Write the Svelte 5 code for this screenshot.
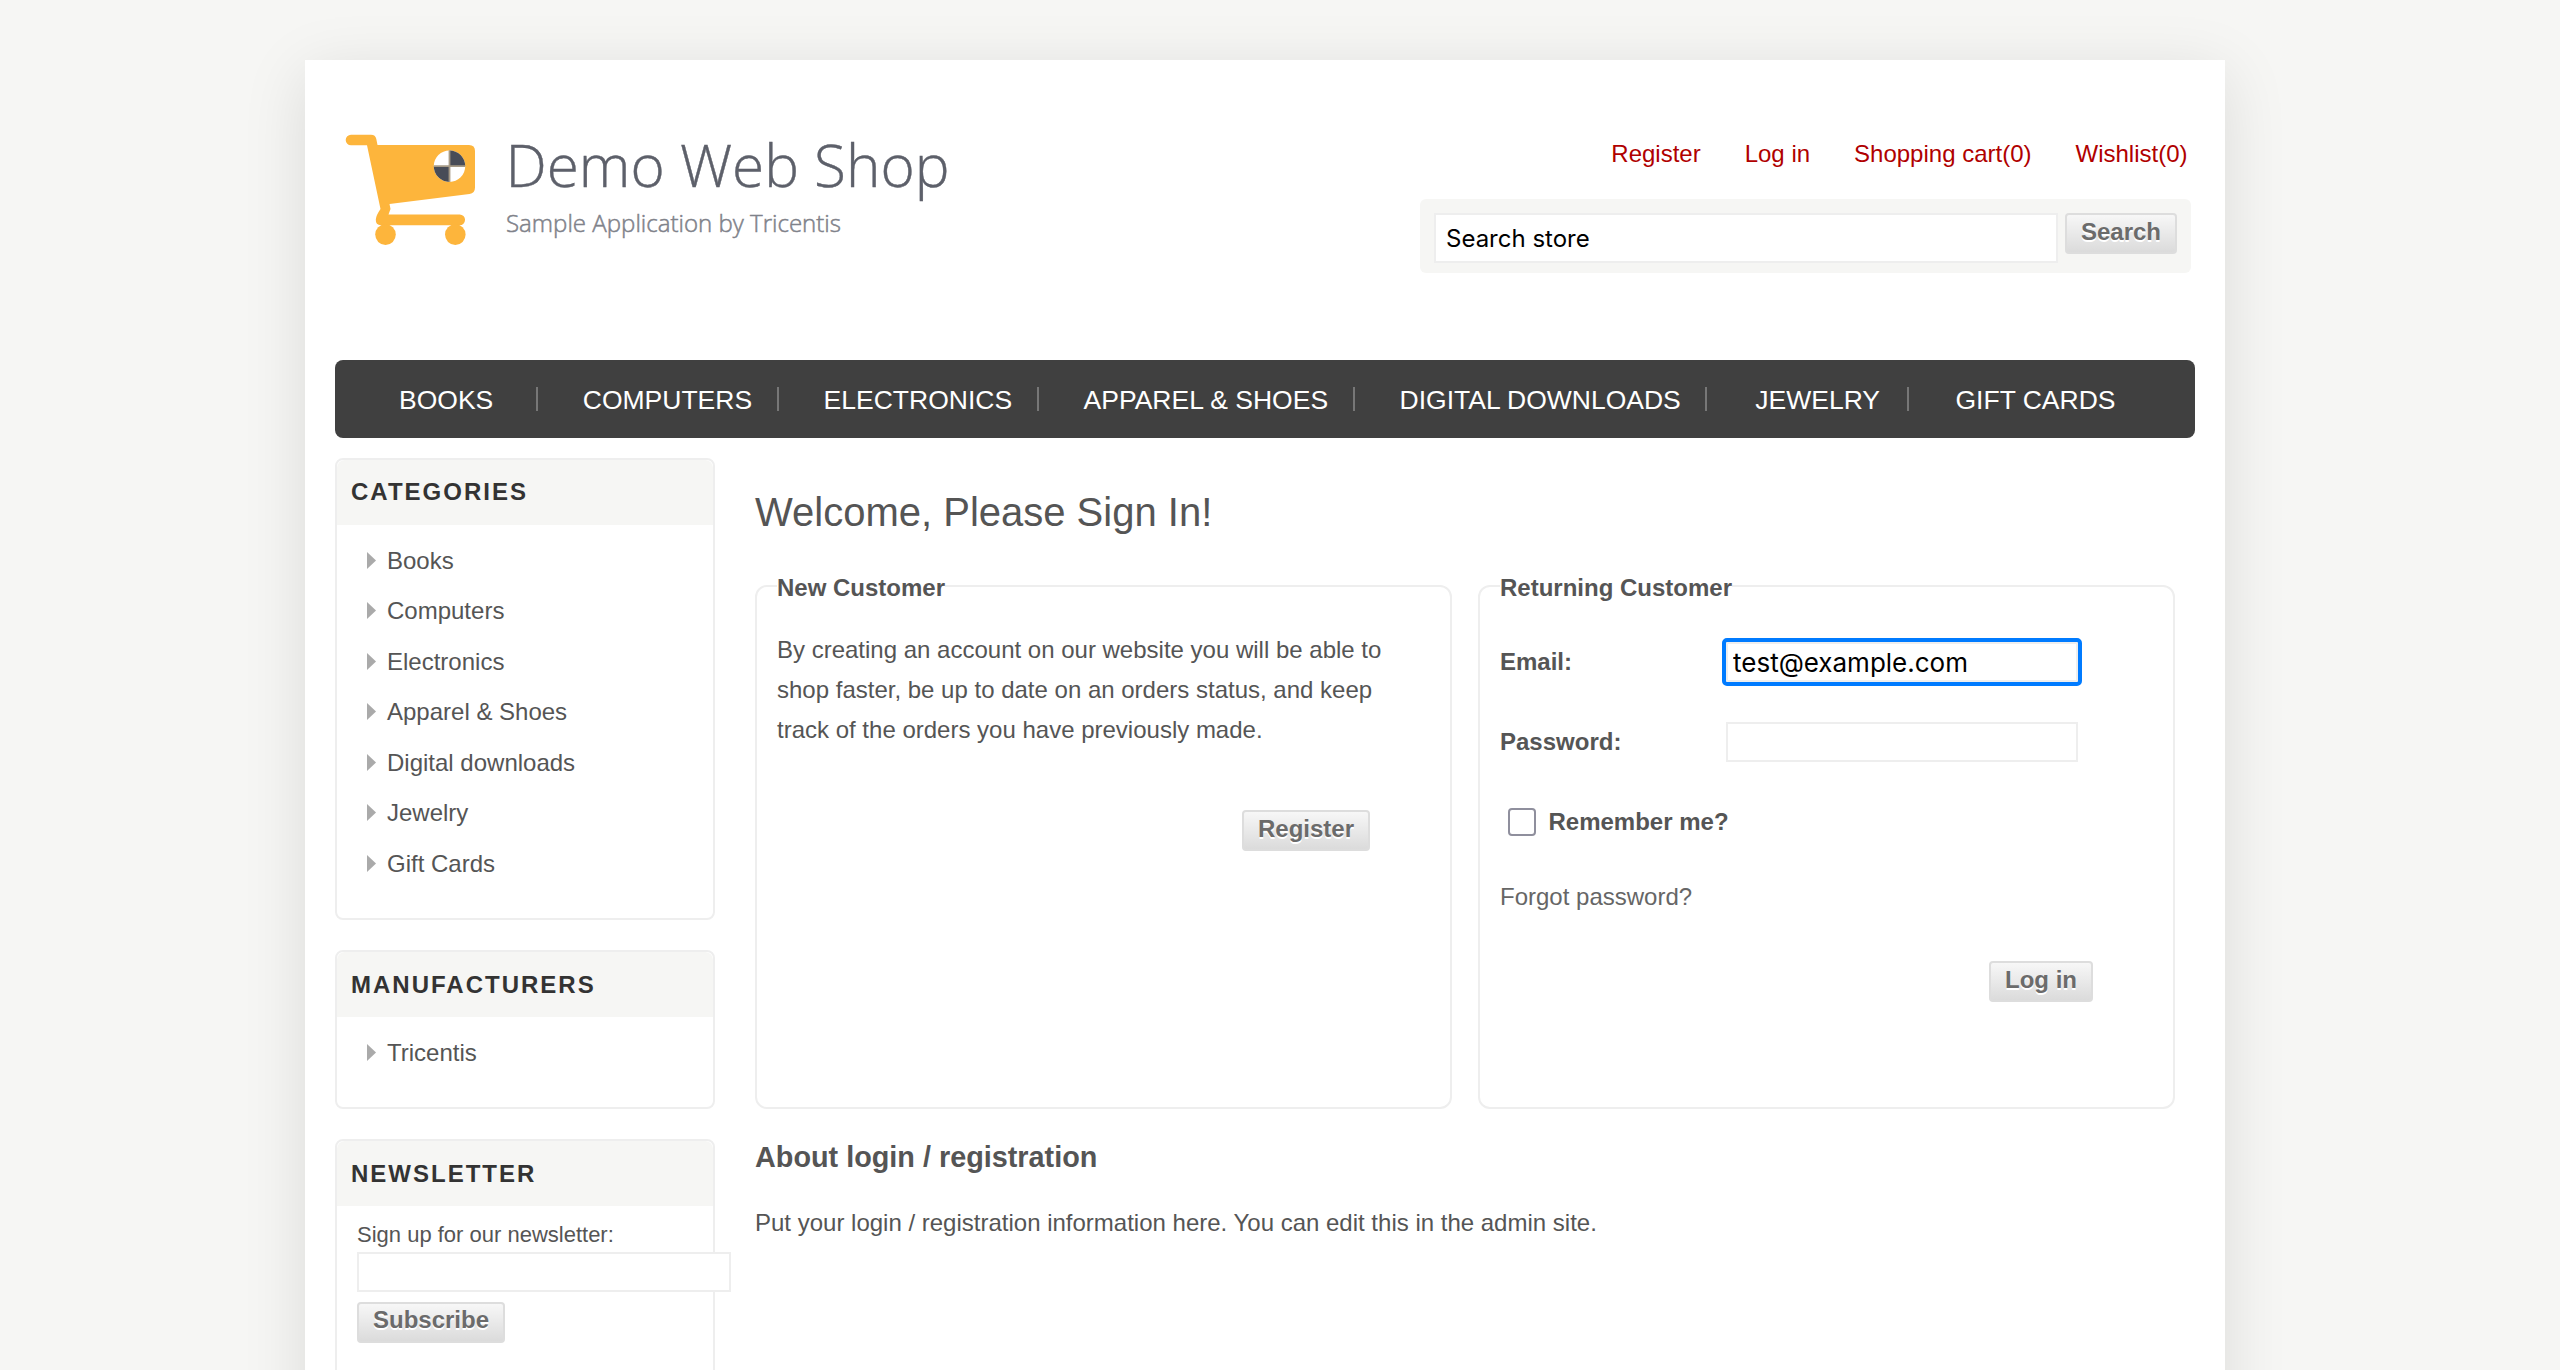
<script>
  const account = ['Register', 'Log in', 'Shopping cart(0)', 'Wishlist(0)'];
  const menu = ['Books', 'Computers', 'Electronics', 'Apparel & Shoes', 'Digital downloads', 'Jewelry', 'Gift Cards'];
  const blocks = [
    { title: 'Categories', items: menu },
    { title: 'Manufacturers', items: ['Tricentis'] }
  ];
  let search = $state('Search store');
  let email = $state('test@example.com');
  let password = $state('');
  let newsletter = $state('');
  let remember = $state(false);
</script>

<div class="page">
  <header>
    <svg class="logo" width="620" height="130" viewBox="335 120 620 130">
      <g fill="#fdb53c">
        <path d="M351 134.7H371Q375.500 134.700 376.300 139L377.500 145H469Q475 145 475 151V187.500Q475 193 469.500 194L389.500 204L390.500 209L388.500 214.500H459.700A5.300 5.300 0 0 1 459.700 225.200H381Q375.500 225.200 375.800 219.500Q376 215.500 380.500 209L367 145.300H351A5.300 5.300 0 0 1 351 134.700Z" />
        <circle cx="385.500" cy="234.600" r="10.300" />
        <circle cx="455.300" cy="234.600" r="10.300" />
      </g>
      <circle cx="449.500" cy="166.200" r="15.700" fill="#fff" />
      <path d="M449.500 166.200V150.500A15.700 15.700 0 0 1 465.200 166.200ZM449.500 166.200V181.900A15.700 15.700 0 0 1 433.800 166.200Z" fill="#484c57" />
      <path d="M449.500 150.500V181.900M433.800 166.200H465.200" stroke="#a69a86" stroke-width="1.800" />
      <text class="brand" x="505.500" y="187" textLength="444" lengthAdjust="spacingAndGlyphs">Demo Web Shop</text>
      <text class="tagline" x="506" y="232" textLength="335" lengthAdjust="spacingAndGlyphs">Sample Application by Tricentis</text>
    </svg>
    <div class="tools">
      <nav class="account">
        {#each account as item}<a href="#top">{item}</a>{/each}
      </nav>
      <form class="search">
        <input class="field" bind:value={search} />
        <button type="button">Search</button>
      </form>
    </div>
  </header>

  <nav class="menu">
    {#each menu as item}<a href="#top">{item}</a>{/each}
  </nav>

  <div class="columns">
    <aside>
      {#each blocks as block}
        <section class="block">
          <h3>{block.title}</h3>
          <ul>
            {#each block.items as item}
              <li>
                <svg width="9" height="17" viewBox="0 0 9 17"><path d="M0 0L9 8.500L0 17Z" fill="#aaa" /></svg>
                <span>{item}</span>
              </li>
            {/each}
          </ul>
        </section>
      {/each}
      <section class="block">
        <h3>Newsletter</h3>
        <div class="signup">
          <label for="newsletter">Sign up for our newsletter:</label>
          <input id="newsletter" class="field" bind:value={newsletter} />
          <button type="button">Subscribe</button>
        </div>
      </section>
    </aside>

    <main>
      <h1>Welcome, Please Sign In!</h1>
      <div class="panels">
        <section class="panel">
          <strong class="legend">New Customer</strong>
          <p class="intro">By creating an account on our website you will be able to shop faster, be up to date on an orders status, and keep track of the orders you have previously made.</p>
          <div class="action register"><button type="button">Register</button></div>
        </section>
        <section class="panel">
          <strong class="legend">Returning Customer</strong>
          <div class="row email">
            <label for="email">Email:</label>
            <input id="email" class="field focused" bind:value={email} />
          </div>
          <div class="row">
            <label for="password">Password:</label>
            <input id="password" class="field" type="password" bind:value={password} />
          </div>
          <div class="remember">
            <input id="remember" type="checkbox" bind:checked={remember} />
            <label for="remember">Remember me?</label>
          </div>
          <a class="forgot" href="#top">Forgot password?</a>
          <div class="action login"><button type="button">Log in</button></div>
        </section>
      </div>
      <h2>About login / registration</h2>
      <p class="about">Put your login / registration information here. You can edit this in the admin site.</p>
    </main>
  </div>
</div>

<style>
  :global(body) {
    background: #f6f6f4;
    overflow: hidden;
  }
  .page, .page * { box-sizing: border-box; }
  .page {
    width: 1920px;
    height: 1500px;
    margin: 60px 0 0 305px;
    padding: 0 30px;
    background: #fff;
    box-shadow: 0 13px 60px rgba(0, 0, 0, 0.115);
    color: #555;
    font: 24px/28px "Liberation Sans", Arial, sans-serif;
  }
  a { color: inherit; text-decoration: none; }
  h1, h2, h3, p, ul { margin: 0; padding: 0; }
  header {
    display: flex;
    justify-content: space-between;
    height: 300px;
  }
  .logo { display: block; margin-top: 60px; }
  .brand, .tagline { font-family: "Open Sans", sans-serif; font-weight: 300; }
  .brand { font-size: 58px; fill: #5d606a; stroke: #5d606a; stroke-width: 0.4px; }
  .tagline { font-size: 24px; fill: #7f828a; stroke: #7f828a; stroke-width: 0.5px; }
  .tools { width: 771px; margin-right: 4px; padding-top: 80px; }
  .account {
    display: flex;
    justify-content: flex-end;
    gap: 44px;
    height: 59px;
    padding-right: 3.500px;
    color: #b00000;
  }
  .search {
    display: flex;
    align-items: flex-start;
    gap: 7px;
    height: 74px;
    padding: 14px;
    border-radius: 6px;
    background: #f6f6f4;
  }
  .field {
    display: block;
    height: 40px;
    padding: 2px 5px;
    border: 2px solid #eee;
    border-radius: 0;
    outline: none;
    background: #fff;
    color: #000;
    font: 26px Inter, sans-serif;
  }
  .search .field { width: 624px; height: 50px; padding: 2px 10px; font-size: 24px; }
  button {
    display: block;
    height: 41px;
    padding: 0 14px 4px;
    border: 2px solid #ddd;
    border-radius: 4px;
    background: linear-gradient(#f7f7f7, #dbdbdb);
    color: #6b6b6b;
    font: bold 24px/32px "Liberation Sans", Arial, sans-serif;
    text-shadow: 0 2px 0 #fff;
  }
  .menu {
    display: flex;
    align-items: center;
    height: 78px;
    padding-left: 18px;
    border-radius: 8px;
    background: #404040;
    color: #fff;
    font-size: 26.500px;
    text-transform: uppercase;
  }
  .menu a {
    height: 24px;
    padding: 0 24.500px 0 45px;
    border-right: 2px solid #777;
    line-height: 26px;
    white-space: nowrap;
  }
  .menu a:first-child { padding-left: 46px; padding-right: 42.500px; }
  .menu a:nth-child(6) { padding-left: 48px; padding-right: 27px; }
  .menu a:last-child { padding-left: 46.500px; border: 0; }
  .columns { display: flex; gap: 40px; padding-top: 20px; }
  aside { width: 380px; }
  .block {
    margin-bottom: 30px;
    border: 2px solid #eee;
    border-radius: 8px;
  }
  h3 {
    height: 65px;
    padding-left: 14px;
    border-radius: 8px 8px 0 0;
    background: #f6f6f4;
    color: #333;
    font-size: 24px;
    line-height: 65px;
    letter-spacing: 2px;
    text-transform: uppercase;
  }
  .block:first-child h3 { line-height: 64px; }
  ul { padding: 10px 0 29px 30px; list-style: none; }
  .block:first-child ul { padding-bottom: 29.500px; }
  li {
    display: flex;
    align-items: center;
    gap: 11px;
    height: 50.500px;
  }
  li span { padding-top: 1px; }
  .signup {
    display: flex;
    flex-direction: column;
    align-items: flex-start;
    height: 190px;
    padding: 14px 0 0 20px;
    font-size: 22px;
  }
  .signup label { height: 32px; line-height: 30px; }
  .signup .field { width: 374px; flex: none; margin-bottom: 10px; }
  main { width: 1420px; }
  h1 { padding-top: 31px; font-size: 40px; font-weight: normal; line-height: 46px; }
  .panels { display: flex; gap: 26px; padding-top: 50px; }
  .panel {
    width: 697px;
    height: 524px;
    padding: 0 20px;
    border: 2px solid #eee;
    border-radius: 12px;
  }
  .legend {
    display: block;
    width: fit-content;
    height: 28px;
    margin-top: -14px;
    background: #fff;
    line-height: 30px;
  }
  .intro { width: 640px; padding-top: 29px; line-height: 40px; }
  .action { display: flex; justify-content: flex-end; }
  .register { padding: 60px 60px 0 0; }
  .row { display: flex; align-items: center; height: 80px; font-weight: bold; }
  .row label { width: 226px; }
  .row .field { width: 352px; }
  .email { margin-top: 21px; }
  .focused { outline: 4px solid #007bff; border-radius: 1px; }
  .remember { display: flex; align-items: center; gap: 12.500px; height: 80px; padding-left: 8px; font-weight: bold; }
  .remember input {
    appearance: none;
    width: 28px;
    height: 28px;
    margin: 0;
    border: 2px solid #8f8f9d;
    border-radius: 4px;
    background: #fff;
  }
  .forgot { display: block; padding-top: 21px; color: #666; }
  .login { padding: 50px 60px 0 0; }
  h2 { padding-top: 31px; font-size: 28.800px; line-height: 34px; }
  .about { padding-top: 35px; }
</style>
